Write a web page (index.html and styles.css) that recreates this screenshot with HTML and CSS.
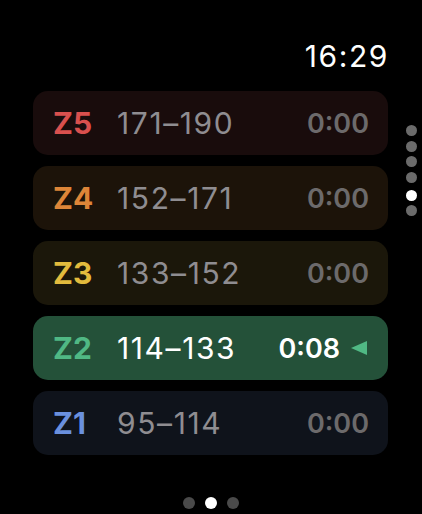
FILE: index.html
```html
<!DOCTYPE html>
<html>

<head>
    <title>Heart Rate Zones</title>
    <link rel="stylesheet" href="styles.css">
</head>

<body>
    <div class="watch">
        <div class="status-bar">
            <span class="clock">16:29</span>
        </div>

        <div class="zones">
            <div class="zone zone-5">
                <span class="zone-label">Z5</span>
                <span class="zone-range">171–190</span>
                <span class="zone-time">0:00</span>
            </div>
            <div class="zone zone-4">
                <span class="zone-label">Z4</span>
                <span class="zone-range">152–171</span>
                <span class="zone-time">0:00</span>
            </div>
            <div class="zone zone-3">
                <span class="zone-label">Z3</span>
                <span class="zone-range">133–152</span>
                <span class="zone-time">0:00</span>
            </div>
            <div class="zone zone-2 active">
                <span class="zone-label">Z2</span>
                <span class="zone-range">114–133</span>
                <span class="zone-time">0:08</span>
                <span class="zone-marker"></span>
            </div>
            <div class="zone zone-1">
                <span class="zone-label">Z1</span>
                <span class="zone-range">95–114</span>
                <span class="zone-time">0:00</span>
            </div>
        </div>

        <div class="side-dots">
            <span class="dot"></span>
            <span class="dot"></span>
            <span class="dot"></span>
            <span class="dot"></span>
            <span class="dot on"></span>
            <span class="dot"></span>
        </div>

        <div class="page-dots">
            <span class="dot"></span>
            <span class="dot on"></span>
            <span class="dot"></span>
        </div>
    </div>
</body>

</html>
```

FILE: styles.css
```css
html,
body {
    margin: 0;
    padding: 0;
    background: #000;
}

.watch {
    position: relative;
    width: 422px;
    height: 514px;
    font-family: "Inter", "Liberation Sans", sans-serif;
    color: #fff;
    overflow: hidden;
}

.status-bar {
    display: flex;
    justify-content: flex-end;
    padding: 38px 34px 0 0;
    height: 53px;
}

.clock {
    font-size: 30px;
    line-height: 36px;
    font-weight: 400;
    letter-spacing: 1.6px;
    margin-right: -1px;
}

.zones {
    display: flex;
    flex-direction: column;
    gap: 11px;
    margin-left: 33px;
    width: 355px;
}

.zone {
    display: flex;
    align-items: center;
    height: 64px;
    border-radius: 15px;
    padding: 0 19px 0 20px;
    font-size: 30px;
}

.zone-label {
    width: 64px;
    font-weight: 700;
}

.zone-range {
    flex: 1;
    color: #8f8d91;
    font-weight: 400;
    letter-spacing: 1.6px;
}

.zone-time {
    color: #6c6a6b;
    font-size: 27px;
    font-weight: 600;
}

.zone-5 { background: #190c0c; }
.zone-5 .zone-label { color: #d9504e; }

.zone-4 { background: #1c1309; }
.zone-4 .zone-label { color: #dd8538; }

.zone-3 { background: #1b170a; }
.zone-3 .zone-label { color: #e2bb3d; }

.zone-2 { background: #245139; }
.zone-2 .zone-label { color: #50b884; }

.zone-1 { background: #0f131b; }
.zone-1 .zone-label { color: #6a90de; }

.zone.active {
    padding-right: 21px;
}

.zone.active .zone-range,
.zone.active .zone-time {
    color: #fff;
}

.zone-marker {
    width: 0;
    height: 0;
    margin-left: 11px;
    border-top: 7px solid transparent;
    border-bottom: 7px solid transparent;
    border-right: 16px solid #50b884;
}

.side-dots {
    position: absolute;
    top: 125px;
    left: 406px;
    display: flex;
    flex-direction: column;
}

.side-dots .dot {
    width: 11px;
    height: 11px;
    margin-bottom: 4.5px;
    border-radius: 50%;
    background: #6b6b6b;
}

.side-dots .dot.on {
    background: #fff;
    margin-top: 2.5px;
}

.page-dots {
    display: flex;
    justify-content: center;
    gap: 10px;
    margin-top: 42px;
}

.page-dots .dot {
    width: 12px;
    height: 12px;
    border-radius: 50%;
    background: #4a4a4a;
}

.page-dots .dot.on {
    background: #fff;
}
```
